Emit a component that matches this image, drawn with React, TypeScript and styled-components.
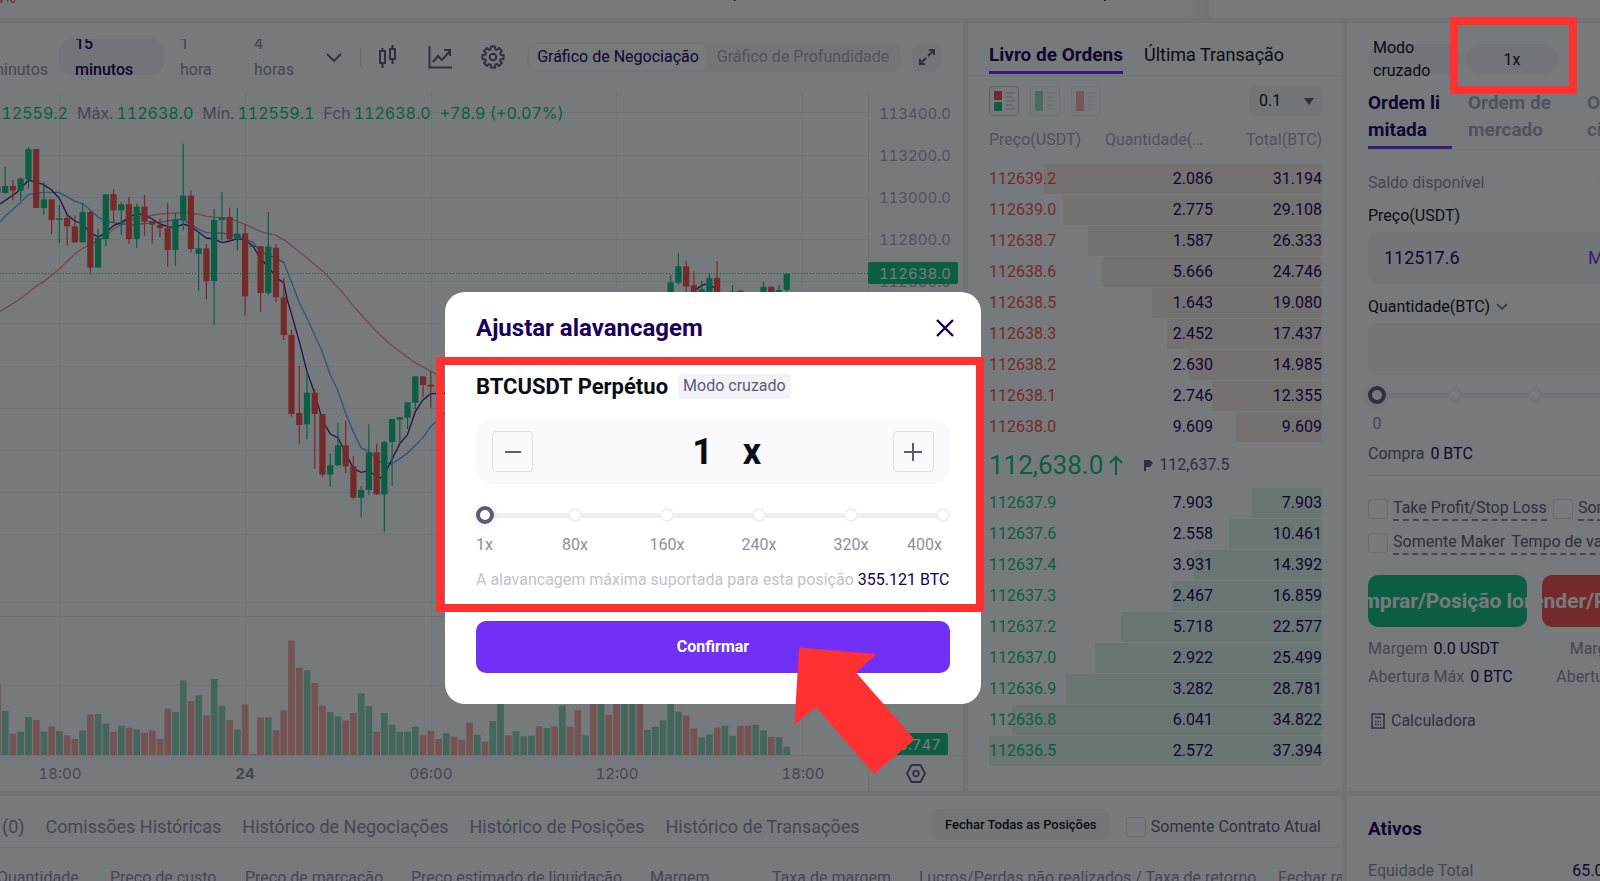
import React from "react";
import styled, { createGlobalStyle } from "styled-components";

const c = {
  ink: "#1a0057",
  black: "#0a0e16",
  sub: "#5e5b75",
  muted: "#8f8da6",
  faint: "#a9a7bb",
  line: "#f0f0f4",
  field: "#f6f6f9",
  green: "#10bf82",
  red: "#f84f49",
  purple: "#7030f5",
  mark: "#ff3131",
};

const Global = createGlobalStyle`
  *, *::before, *::after { box-sizing: border-box; }
  body { margin: 0; background: #f0f1f4; color: ${c.ink}; font: 400 16px/24px Roboto, "Noto Sans", sans-serif; overflow: hidden; }
  button, input, select { font: inherit; color: inherit; margin: 0; }
  button { border: 0; background: none; padding: 0; cursor: pointer; }
`;

/* ---------- page frame ---------- */
const Page = styled.div`
  min-height: 100vh;
  overflow: hidden;
`;
const Ticker = styled.header`
  display: flex;
  height: 18px;
  overflow: hidden;
  background: #fff;
`;
const TickerStats = styled.div`
  flex: 1;
  display: grid;
  grid-template-columns: 106px 155px 472px 184px 186px 1fr;
  margin-top: -19px;
`;
const Change = styled.span`
  color: ${c.red};
  margin-top: 5px;
  margin-left: -5px;
`;
const TickerEdge = styled.div`
  width: 30px;
  margin-right: 390px;
  background: linear-gradient(to right, #fff, #f0f1f4);
`;
const Columns = styled.main`
  display: grid;
  grid-template-columns: minmax(0, 1fr) 253px;
  gap: 5px;
  margin-top: 5px;
`;
const Left = styled.div`
  display: grid;
  grid-template-columns: minmax(0, 1fr) 374px;
  grid-template-rows: auto 1fr;
  gap: 5px;
`;
const Right = styled.div`
  display: grid;
  grid-template-rows: 768px 1fr;
  gap: 5px;
`;
const Panel = styled.section`
  background: #fff;
  min-width: 0;
`;

/* ---------- chart ---------- */
const ChartPanel = styled(Panel)`
  overflow: hidden;
`;
const Toolbar = styled.div`
  display: flex;
  justify-content: flex-end;
  align-items: center;
  height: 69px;
  padding: 0 21px 2px 0;
`;
const Interval = styled.button<{ $active?: boolean; $width: number }>`
  flex: none;
  display: flex;
  align-items: center;
  width: ${(p) => p.$width}px;
  height: 36px;
  padding: 0 16px;
  overflow: hidden;
  border-radius: 12px;
  text-align: left;
  line-height: 26px;
  font-weight: ${(p) => (p.$active ? 500 : 400)};
  color: ${(p) => (p.$active ? c.ink : c.muted)};
  background: ${(p) => (p.$active ? "#f1f1f5" : "none")};
`;
const Chevron = styled.svg`
  flex: none;
  margin-left: 4px;
`;
const IconButton = styled.button`
  flex: none;
  display: flex;
  color: ${c.sub};
  margin-right: 29px;
  &:nth-last-child(3) { margin-right: 22px; }
`;
const Divider = styled.span`
  flex: none;
  width: 1px;
  height: 18px;
  margin: 0 16px 0 18px;
  background: #dcdce4;
`;
const Segmented = styled.div`
  flex: none;
  display: flex;
  height: 30px;
  padding: 2px;
  border-radius: 10px;
  background: ${c.field};
`;
const Segment = styled.button<{ $active?: boolean; $width: number }>`
  width: ${(p) => p.$width}px;
  border-radius: 8px;
  white-space: nowrap;
  background: ${(p) => (p.$active ? "#fff" : "none")};
  color: ${(p) => (p.$active ? c.ink : c.faint)};
`;
const Expand = styled.button`
  flex: none;
  display: grid;
  place-items: center;
  width: 30px;
  height: 30px;
  margin-left: 11px;
  border-radius: 10px;
  color: ${c.sub};
  background: ${c.field};
`;
const ChartArea = styled.div`
  position: relative;
  height: 699px;
`;
const Legend = styled.div`
  position: absolute;
  top: 9px;
  left: -9px;
  display: flex;
  gap: 9px;
  font-family: Inter, sans-serif;
  font-variant-numeric: tabular-nums;
  white-space: nowrap;
  color: ${c.muted};
  b { font-weight: 400; color: ${c.green}; }
  span b { margin-left: 3px; }
`;
const ChartSvg = styled.svg`
  display: block;
  width: 100%;
  height: 100%;
  font-family: Inter, sans-serif;
  font-size: 15px;
  font-variant-numeric: tabular-nums;
`;

const STEP = 7.738;
const cx = (k: number) => 5.2 + k * STEP;

// index, rising, high, low, body top, body bottom (thirds of a pixel)
const candles: [number, number, number, number, number, number][] = [
  [-1, 0, 560, 580, 560, 578], [0, 1, 500, 582, 558, 579], [1, 0, 540, 601, 558, 572], [2, 1, 531, 603, 536, 572],
  [3, 1, 441, 566, 447, 538], [4, 0, 447, 624, 447, 624], [5, 1, 547, 645, 598, 624],
  [6, 0, 598, 702, 598, 660], [7, 1, 615, 730, 655, 660], [8, 0, 640, 736, 654, 679],
  [9, 0, 646, 727, 679, 727], [10, 1, 611, 727, 636, 727], [11, 0, 632, 823, 636, 803],
  [12, 1, 686, 803, 714, 803], [13, 1, 583, 739, 583, 717], [14, 0, 567, 668, 582, 631],
  [15, 1, 606, 705, 613, 631], [16, 0, 591, 731, 613, 717], [17, 1, 611, 744, 620, 717],
  [18, 0, 585, 707, 620, 665], [19, 0, 663, 731, 663, 674], [20, 0, 655, 711, 675, 684],
  [21, 0, 610, 801, 684, 750], [22, 1, 640, 798, 658, 750], [23, 1, 431, 691, 587, 660],
  [24, 0, 572, 758, 587, 747], [25, 1, 695, 873, 745, 762], [26, 0, 732, 898, 745, 844],
  [27, 1, 626, 975, 660, 843], [28, 1, 576, 720, 651, 660], [29, 0, 623, 727, 651, 717],
  [30, 1, 624, 752, 700, 717], [31, 0, 673, 947, 700, 889], [32, 1, 736, 741, 736, 740],
  [33, 0, 738, 936, 739, 879], [34, 1, 636, 885, 740, 879], [35, 0, 732, 905, 743, 892],
  [36, 0, 835, 1020, 892, 1005], [37, 0, 988, 1250, 1005, 1242], [38, 0, 1097, 1331, 1239, 1275],
  [39, 1, 1117, 1318, 1178, 1273], [40, 0, 1167, 1406, 1178, 1242], [41, 0, 1242, 1432, 1242, 1424],
  [42, 1, 1361, 1460, 1396, 1424], [43, 1, 1270, 1397, 1336, 1396], [44, 0, 1262, 1419, 1336, 1399],
  [45, 0, 1368, 1498, 1399, 1493], [46, 1, 1458, 1552, 1470, 1493], [47, 1, 1273, 1486, 1357, 1470],
  [48, 0, 1331, 1483, 1357, 1483], [49, 1, 1322, 1595, 1326, 1483], [50, 1, 1257, 1458, 1257, 1326],
  [51, 1, 1252, 1327, 1252, 1259], [52, 1, 1206, 1287, 1207, 1253], [53, 1, 1128, 1229, 1129, 1208],
  [54, 0, 1128, 1192, 1129, 1155], [55, 0, 1115, 1223, 1154, 1160],
  [86, 1, 825, 890, 847, 890], [87, 1, 760, 854, 799, 848], [88, 0, 782, 890, 799, 860],
  [89, 0, 813, 890, 856, 890], [90, 1, 843, 890, 868, 876], [91, 1, 822, 890, 834, 890],
  [92, 0, 783, 890, 834, 890], [94, 1, 856, 890, 875, 890], [95, 0, 871, 890, 872, 890],
  [98, 1, 846, 890, 860, 890], [99, 0, 860, 890, 860, 890], [100, 1, 854, 890, 870, 890],
  [101, 1, 820, 890, 821, 870],
];

// volume bars from index -1: positive rising, negative falling (thirds of a pixel)
const volumes = [
  -214, 132, -64, 70, 114, -105, 70, -86, 72, -59, -48, 74, -122, 123, 94, -70, 88, -82, 77, -66, -74, -48,
  -139, 129, 224, -162, 179, -119, 228, 148, -105, 77, -152, 3, -113, 113, -75, -134, -344, -262, 254, -216,
  -148, 129, 116, -104, -126, 185, 147, -70, 126, 91, 70, 70, 85, -59, -72, -48, 65, -55, -46, -97, 61, -40,
  102, 154, -59, 71, 56, 58, -86, 81, -86, 148, -85, -134, 59, -160, 170, -120, -175, 180, 185, -165, 75, 85,
  104, 154, 130, -118, -80, 53, 62, -82, 88, 58, -87, -88, 91, 74, -55, 53, 25,
];

const ma = {
  violet:
    "0,612 50,578 86,540 130,553 155,570 178,595 202,645 225,663 248,672 271,698 295,711 318,698 341,676 364,668 387,652 410,640 434,645 457,657 480,672 503,680 527,683 550,672 573,680 596,697 619,714 642,717 666,728 689,723 712,716 735,720 759,738 781,775 805,800 828,832 851,848 862,900 874,940 898,1025 921,1115 944,1180 967,1260 991,1302 1014,1313 1037,1360 1060,1405 1083,1417 1107,1412 1130,1430 1145,1434 1160,1410 1200,1330 1222,1305 1246,1235 1269,1200 1292,1181 1340,1180",
  blue:
    "0,665 20,645 62,607 86,583 130,577 178,577 225,604 250,612 271,630 295,652 318,664 364,672 400,674 434,670 480,667 527,658 550,660 573,673 596,688 619,698 666,699 712,708 759,727 781,755 828,775 851,787 874,845 898,908 921,955 967,1055 991,1125 1014,1172 1037,1240 1060,1295 1083,1343 1107,1355 1140,1385 1176,1392 1222,1360 1269,1313 1292,1280 1340,1235",
  red:
    "0,935 60,897 110,858 135,842 178,807 225,761 250,744 271,735 318,707 341,687 387,660 434,650 480,642 550,638 600,643 619,649 689,655 735,673 781,694 828,706 860,725 920,773 970,815 1030,880 1060,918 1130,995 1170,1033 1245,1088 1340,1140",
};

function Chart() {
  return (
    <ChartSvg viewBox="0 92 963 699" preserveAspectRatio="xMaxYMin slice" role="img" aria-label="Gráfico BTCUSDT">
      <g stroke={c.line} strokeWidth="1">
        {[59.5, 245.5, 431.5, 616.5, 802.5].map((x) => <path key={x} d={`M${x} 92V755`} />)}
        {[112.5, 155.5, 197.5, 239.5, 281.5, 323.5, 366.5, 408.5, 450.5, 492.5, 534.5, 602.5, 685.5].map((y) => (
          <path key={y} d={`M0 ${y}H868`} />
        ))}
      </g>
      <path d="M0 616.5H963M0 755.5H963M868.5 92V791" stroke="#ebebf0" />
      {volumes.map((v, i) => (
        <rect key={i} x={cx(i - 1) - 3.3} width="6.7" y={755 - Math.abs(v) / 3} height={Math.abs(v) / 3} fill={v > 0 ? "#8ed3b8" : "#f9aaa5"} />
      ))}
      <g transform="scale(.33333)" fill="none" strokeWidth="4">
        <polyline points={ma.red} stroke="#f8918a" />
        <polyline points={ma.blue} stroke="#6aa6e8" />
        <polyline points={ma.violet} stroke="#3f1f80" />
        <polyline points="2080,875 2100,860 2113,853 2130,853 2150,870" stroke="#3f1f80" />
      </g>
      {candles.map(([k, up, hi, lo, top, bottom]) => (
        <g key={k} fill={up ? c.green : c.red}>
          <rect x={cx(k) - 0.6} width="1.2" y={hi / 3} height={(lo - hi) / 3} />
          <rect x={cx(k) - 3.1} width="6.2" y={top / 3} height={Math.max(1.5, (bottom - top) / 3)} />
        </g>
      ))}
      <path d="M0 273.5H868" stroke={c.green} strokeDasharray="1 2" />
      <g fill={c.faint} textAnchor="end">
        <text x="951" y="119">113400.0</text>
        <text x="951" y="161">113200.0</text>
        <text x="951" y="203">113000.0</text>
        <text x="951" y="245">112800.0</text>
        <text x="951" y="287">112600.0</text>
      </g>
      <rect x="868" y="262" width="90" height="22" rx="2" fill={c.green} />
      <rect x="868" y="733" width="80" height="22" rx="2" fill={c.green} />
      <g fill="#fff" textAnchor="end">
        <text x="951" y="279">112638.0</text>
        <text x="941" y="750">5.747</text>
      </g>
      <g fill={c.muted} textAnchor="middle">
        <text x="60" y="779">18:00</text>
        <text x="245" y="779" fontWeight="700">24</text>
        <text x="431" y="779">06:00</text>
        <text x="617" y="779">12:00</text>
        <text x="803" y="779">18:00</text>
      </g>
      <g fill="none" stroke={c.sub} strokeWidth="1.8" strokeLinejoin="round">
        <path d="M911.5 765h9l4.500 8.500-4.500 8.500h-9l-4.500-8.500z" />
        <circle cx="916" cy="773.5" r="2.800" />
      </g>
    </ChartSvg>
  );
}

const gearPath = (() => {
  const at = (radius: number, degrees: number) => {
    const a = (degrees * Math.PI) / 180;
    return `${(12 + radius * Math.sin(a)).toFixed(2)} ${(12 - radius * Math.cos(a)).toFixed(2)}`;
  };
  return (
    "M" +
    Array.from({ length: 8 }, (_, i) => i * 45)
      .map((a) => [at(8, a - 16), at(10.8, a - 11), at(10.8, a + 11), at(8, a + 16)].join("L"))
      .join("L") +
    "Z"
  );
})();

/* ---------- order book ---------- */
const BookTabs = styled.div`
  display: flex;
  gap: 21px;
  height: 53px;
  padding: 0 21px;
  border-bottom: 1px solid ${c.line};
`;
const BookTab = styled.button<{ $active?: boolean }>`
  height: 51px;
  padding-top: 16px;
  font-size: ${(p) => (p.$active ? 19 : 18)}px;
  font-weight: ${(p) => (p.$active ? 700 : 400)};
  border-bottom: 3px solid ${(p) => (p.$active ? c.purple : "transparent")};
  color: ${(p) => (p.$active ? c.ink : c.black)};
`;
const BookTools = styled.div`
  display: flex;
  gap: 11px;
  padding: 10px 20px 0 21px;
`;
const Mode = styled.button<{ $active?: boolean }>`
  width: 30px;
  height: 30px;
  border: 1px solid ${(p) => (p.$active ? "#c9c8d6" : c.line)};
  border-radius: 4px;
  display: grid;
  place-items: center;
`;
const Precision = styled.label`
  display: grid;
  align-items: center;
  width: 73px;
  height: 30px;
  margin-left: auto;
  border-radius: 6px;
  background: ${c.field};
  select, svg { grid-area: 1 / 1; }
  select { appearance: none; border: 0; background: none; padding: 0 10px; height: 30px; color: ${c.black}; }
  svg { justify-self: end; margin-right: 8px; pointer-events: none; }
`;
const Book = styled.table`
  width: 333px;
  margin: 6px 20px 24px 21px;
  table-layout: fixed;
  border-collapse: separate;
  border-spacing: 0 1px;
  th, td { padding: 0; text-align: right; font-weight: 400; height: 30px; }
  th { height: 40px; padding-bottom: 7px; color: ${c.faint}; overflow: hidden; text-overflow: ellipsis; white-space: nowrap; }
  th:first-child, td:first-child { text-align: left; }
  th:nth-child(2) { padding-left: 5px; padding-right: 2px; }
`;
const Level = styled.tr<{ $side: "ask" | "bid" }>`
  background-image: linear-gradient(${(p) => (p.$side === "ask" ? "#fceae6, #fceae6" : "#e3f4ee, #e3f4ee")});
  background-repeat: no-repeat;
  background-position: right;
  td:first-child { color: ${(p) => (p.$side === "ask" ? c.red : c.green)}; }
`;
const MidCell = styled.td`
  && { height: 44px; }
  div { display: flex; align-items: center; color: ${c.sub}; }
  strong { font-size: 26px; font-weight: 400; color: ${c.green}; margin-right: 6px; }
  svg + svg { margin: 0 6px 0 20px; }
`;

const asks = [
  ["112639.2", "2.086", "31.194"], ["112639.0", "2.775", "29.108"], ["112638.7", "1.587", "26.333"],
  ["112638.6", "5.666", "24.746"], ["112638.5", "1.643", "19.080"], ["112638.3", "2.452", "17.437"],
  ["112638.2", "2.630", "14.985"], ["112638.1", "2.746", "12.355"], ["112638.0", "9.609", "9.609"],
];
const bids = [
  ["112637.9", "7.903", "7.903"], ["112637.6", "2.558", "10.461"], ["112637.4", "3.931", "14.392"],
  ["112637.3", "2.467", "16.859"], ["112637.2", "5.718", "22.577"], ["112637.0", "2.922", "25.499"],
  ["112636.9", "3.282", "28.781"], ["112636.8", "6.041", "34.822"], ["112636.5", "2.572", "37.394"],
];
const deepest = 37.394;

function Levels({ rows, side }: { rows: string[][]; side: "ask" | "bid" }) {
  return (
    <tbody>
      {rows.map(([price, qty, total]) => (
        <Level key={price} $side={side} style={{ backgroundSize: `${(Number(total) / deepest) * 100}% 100%` }}>
          <td>{price}</td>
          <td>{qty}</td>
          <td>{total}</td>
        </Level>
      ))}
    </tbody>
  );
}

const ModeIcon = ({ kind }: { kind: "both" | "bid" | "ask" }) => (
  <svg width="22" height="22" viewBox="0 0 22 22" fill="none">
    {kind === "both" ? (
      <>
        <rect x="1" y="1" width="8" height="9" rx="1" fill={c.red} />
        <rect x="1" y="12" width="8" height="9" rx="1" fill={c.green} />
      </>
    ) : (
      <rect x="1" y="1" width="8" height="20" rx="1" fill={kind === "bid" ? "#9fdcc6" : "#fbb3ae"} />
    )}
    <path d="M13 3h9M13 7h6M13 11h9M13 15h6M13 19h9" stroke={kind === "both" ? "#d3d2dd" : "#ececf1"} strokeWidth="1.5" />
  </svg>
);

/* ---------- order form ---------- */
const Form = styled.form`
  display: flex;
  flex-direction: column;
  align-items: stretch;
  width: 333px;
  margin-left: 21px;
`;
const ModeRow = styled.div`
  display: flex;
  gap: 6px;
  padding-top: 21px;
`;
const Pill = styled.button`
  position: relative;
  display: flex;
  align-items: center;
  justify-content: center;
  width: 92px;
  height: 30px;
  padding: 0 5px;
  border-radius: 15px;
  background: #f1f1f5;
  color: ${c.black};
  text-align: left;
  line-height: 23px;
`;
const PillMark = styled.span`
  position: absolute;
  z-index: 3;
  top: -27px;
  left: -16px;
  width: 127px;
  height: 77px;
  border: 8px solid ${c.mark};
`;
const OrderTabs = styled.div`
  display: flex;
  gap: 16px;
  margin-top: 15px;
  border-bottom: 1px solid ${c.line};
`;
const OrderTab = styled.button<{ $active?: boolean; $width: number }>`
  flex: none;
  width: ${(p) => p.$width}px;
  height: 60px;
  text-align: left;
  font-size: 19px;
  font-weight: 700;
  line-height: 27px;
  padding-bottom: 3px;
  color: ${(p) => (p.$active ? c.ink : c.faint)};
  border-bottom: 3px solid ${(p) => (p.$active ? c.purple : "transparent")};
`;
const Line = styled.div<{ $top: number; $tone?: string }>`
  display: flex;
  align-items: center;
  gap: 6px;
  height: 24px;
  margin-top: ${(p) => p.$top}px;
  color: ${(p) => p.$tone ?? c.muted};
  white-space: nowrap;
  b { font-weight: 400; color: ${c.ink}; }
`;
const Ends = styled(Line)`
  justify-content: space-between;
  span { display: flex; gap: 6px; }
`;
const Field = styled.div`
  display: flex;
  align-items: center;
  height: 52px;
  margin-top: 4px;
  padding: 0 16px;
  border-radius: 10px;
  background: ${c.field};
  font-size: 18px;
  input { border: 0; background: none; padding: 0; width: 204px; outline: 0; }
  button { color: ${c.purple}; }
`;
const SliderHolder = styled.div`
  flex: 1;
`;
const Zero = styled.span`
  width: 18px;
  text-align: center;
`;
const Rule = styled.hr`
  width: 100%;
  height: 1px;
  border: 0;
  margin: 9px 0 16px;
  background: #e2e2ea;
`;
const Checks = styled.div`
  display: flex;
  gap: 6px;
  height: 34px;
  align-items: center;
  white-space: nowrap;
`;
const Check = styled.label`
  display: flex;
  align-items: center;
  gap: 5px;
  color: ${c.sub};
  input {
    appearance: none;
    width: 20px;
    height: 20px;
    border: 1px solid #dddde6;
    border-radius: 3px;
  }
`;
const Dashed = styled.span`
  line-height: 22px;
  border-bottom: 2px dashed ${c.muted};
  color: ${c.sub};
`;
const Actions = styled.div`
  display: grid;
  grid-template-columns: 1fr 1fr;
  gap: 15px;
  margin-top: 15px;
`;
const Action = styled.button<{ $tone: string }>`
  display: flex;
  justify-content: center;
  align-items: center;
  height: 52px;
  overflow: hidden;
  border-radius: 10px;
  background: ${(p) => p.$tone};
  color: #fff;
  font-size: 21px;
  font-weight: 700;
  white-space: nowrap;
`;
const Calculator = styled.a`
  display: flex;
  align-items: center;
  gap: 6px;
  margin: 20px 0 0 3px;
  color: ${c.sub};
  text-decoration: none;
`;
const Assets = styled.div`
  width: 354px;
  padding: 20px 0 0 21px;
  h2 { margin: 0; font-size: 19px; line-height: 26px; font-weight: 700; }
`;

/* ---------- slider ---------- */
const SliderBox = styled.div`
  display: grid;
  align-items: center;
  height: 18px;
  > * { grid-area: 1 / 1; }
`;
const Track = styled.div`
  height: 5px;
  margin: 0 7px;
  background: ${c.line};
`;
const Dots = styled.div`
  display: flex;
  justify-content: space-between;
  i { width: 14px; height: 14px; border-radius: 50%; border: 2px solid ${c.line}; background: #fff; }
`;
const Range = styled.input`
  appearance: none;
  width: 100%;
  height: 18px;
  margin: 0;
  background: none;
  &::-webkit-slider-thumb {
    appearance: none;
    width: 18px;
    height: 18px;
    border-radius: 50%;
    border: 4px solid ${c.sub};
    background: #fff;
    box-shadow: 0 2px 8px rgba(40, 30, 90, 0.12);
  }
`;
function Slider({ stops, label, min, max }: { stops: number; label: string; min: number; max: number }) {
  return (
    <SliderBox>
      <Track />
      <Dots>{Array.from({ length: stops }, (_, i) => <i key={i} />)}</Dots>
      <Range type="range" aria-label={label} min={min} max={max} defaultValue={min} />
    </SliderBox>
  );
}

/* ---------- positions ---------- */
const Positions = styled(Panel)`
  grid-column: 1 / -1;
  overflow: hidden;
`;
const PosBar = styled.div`
  display: flex;
  align-items: center;
  height: 52px;
  padding: 10px 21px 0 0;
  border-bottom: 1px solid ${c.line};
`;
const PosTabs = styled.div`
  display: flex;
  gap: 21px;
  margin-right: auto;
  padding-left: 2px;
  button { font-size: 18px; color: ${c.muted}; white-space: nowrap; }
`;
const CloseAll = styled.button`
  width: 178px;
  height: 31px;
  margin: 0 16px 4px 0;
  border-radius: 8px;
  background: ${c.field};
  color: ${c.black};
  font-size: 13px;
  font-weight: 500;
  white-space: nowrap;
`;
const PosTable = styled.table`
  table-layout: fixed;
  width: 1500px;
  margin: 18px 0 0 -3px;
  border-spacing: 0;
  th { padding: 0; text-align: left; font-weight: 400; color: ${c.muted}; white-space: nowrap; }
`;

/* ---------- dialog ---------- */
const Backdrop = styled.div`
  position: fixed;
  inset: 0;
  z-index: 2;
  display: flex;
  align-items: flex-start;
  justify-content: center;
  padding: 292px 174px 0 0;
  background: rgba(8, 12, 16, 0.55);
`;
const Dialog = styled.div`
  position: relative;
  width: 536px;
  padding: 23px 31px 31px;
  border-radius: 20px;
  background: #fff;
`;
const DialogHead = styled.div`
  display: flex;
  justify-content: space-between;
  align-items: center;
  height: 26px;
  h1 { margin: 0; font-size: 24px; line-height: 26px; font-weight: 700; }
  button { display: flex; margin-right: -4px; }
`;
const Pair = styled.div`
  display: flex;
  align-items: center;
  gap: 10px;
  margin-top: 33px;
  h2 { margin: 0; font-size: 22px; line-height: 24px; font-weight: 700; color: ${c.black}; }
  span { height: 25px; padding: 0 5px; border-radius: 4px; background: #f3f2f7; color: ${c.sub}; }
`;
const Stepper = styled.div`
  display: flex;
  align-items: center;
  justify-content: space-between;
  height: 65px;
  margin-top: 20px;
  padding: 0 16px;
  border-radius: 16px;
  background: #fafafc;
  color: ${c.black};
  font-size: 36px;
  font-weight: 700;
`;
const StepButton = styled.button`
  display: grid;
  place-items: center;
  width: 41px;
  height: 41px;
  border: 1px solid #dddde6;
  border-radius: 4px;
  color: ${c.sub};
`;
const Amount = styled.label`
  display: flex;
  align-items: center;
  gap: 30px;
  input { width: 48px; border: 0; padding: 0; background: none; text-align: right; outline: 0; }
`;
const SliderWrap = styled.div`
  margin-top: 22px;
`;
const Scale = styled.div`
  display: grid;
  grid-template-columns: 53fr 92fr 92fr 92fr 92fr 45fr;
  padding-right: 8px;
  margin-top: 9px;
  text-align: center;
  color: ${c.muted};
  span:first-child { text-align: left; }
  span:last-child { text-align: right; }
`;
const Note = styled.p`
  margin: 11px 0 0;
  color: #c3c1d2;
  white-space: nowrap;
  b { font-weight: 400; color: ${c.ink}; }
`;
const Confirm = styled.button`
  display: block;
  width: 100%;
  height: 52px;
  margin-top: 29px;
  border-radius: 10px;
  background: ${c.purple};
  color: #fff;
  font-weight: 700;
`;
const DialogMark = styled.div`
  position: absolute;
  top: 65px;
  left: -9px;
  right: -3px;
  height: 255px;
  border: 8px solid ${c.mark};
  pointer-events: none;
`;
const Pointer = styled.svg`
  position: absolute;
  top: 355px;
  left: 349px;
  pointer-events: none;
`;

export default function App() {
  return (
    <>
      <Global />
      <Page>
        <Ticker>
          <TickerStats>
            <Change>4%</Change>
            <span>,</span>
            <span>,</span>
            <span>p</span>
            <span>,</span>
            <span>p</span>
          </TickerStats>
          <TickerEdge />
        </Ticker>
        <Columns>
          <Left>
            <ChartPanel>
              <Toolbar>
                <Interval $width={85}>5 minutos</Interval>
                <Interval $width={105} $active>15 minutos</Interval>
                <Interval $width={74}>1 hora</Interval>
                <Interval $width={84}>4 horas</Interval>
                <Chevron width="16" height="16" viewBox="0 0 16 16" fill="none" stroke={c.sub} strokeWidth="1.8">
                  <path d="M1 5l7 7 7-7" />
                </Chevron>
                <Divider />
                <IconButton aria-label="Tipo de gráfico">
                  <svg width="22" height="24" viewBox="0 0 22 24" fill="none" stroke="currentColor" strokeWidth="2">
                    <path d="M3 6h5v12H3zM5.500 3v3M5.500 18v5M13 4h5v10h-5zM15.500 0v4M15.500 14v5" />
                  </svg>
                </IconButton>
                <IconButton aria-label="Indicadores">
                  <svg width="24" height="24" viewBox="0 0 24 24" fill="none" stroke="currentColor" strokeWidth="2">
                    <path d="M1.500 1v21.500H24M5 17l5-6 4 4 8-9M16 5h6v6" />
                  </svg>
                </IconButton>
                <IconButton aria-label="Configurações">
                  <svg width="24" height="24" viewBox="0 0 24 24" fill="none" stroke="currentColor" strokeWidth="2" strokeLinejoin="round">
                    <path d={gearPath} />
                    <circle cx="12" cy="12" r="3.300" />
                  </svg>
                </IconButton>
                <Segmented>
                  <Segment $active $width={178}>Gráfico de Negociação</Segment>
                  <Segment $width={192}>Gráfico de Profundidade</Segment>
                </Segmented>
                <Expand aria-label="Expandir">
                  <svg width="16" height="16" viewBox="0 0 16 16" fill="none" stroke="currentColor" strokeWidth="2">
                    <path d="M9 7l6-6M10 1h5v5M7 9l-6 6M1 10v5h5" />
                  </svg>
                </Expand>
              </Toolbar>
              <ChartArea>
                <Chart />
                <Legend>
                  <b>112559.2</b>
                  <span>Máx.<b>112638.0</b></span>
                  <span>Mín.<b>112559.1</b></span>
                  <span>Fch<b>112638.0</b></span>
                  <b>+78.9 (+0.07%)</b>
                </Legend>
              </ChartArea>
            </ChartPanel>

            <Panel>
              <BookTabs>
                <BookTab $active>Livro de Ordens</BookTab>
                <BookTab>Última Transação</BookTab>
              </BookTabs>
              <BookTools>
                <Mode $active aria-label="Compra e venda"><ModeIcon kind="both" /></Mode>
                <Mode aria-label="Compras"><ModeIcon kind="bid" /></Mode>
                <Mode aria-label="Vendas"><ModeIcon kind="ask" /></Mode>
                <Precision>
                  <select aria-label="Precisão"><option>0.1</option></select>
                  <svg width="10" height="7" viewBox="0 0 10 7"><path d="M0 0h10L5 7z" fill={c.sub} /></svg>
                </Precision>
              </BookTools>
              <Book>
                <colgroup>
                  <col width="111" />
                  <col width="113" />
                  <col />
                </colgroup>
                <thead>
                  <tr>
                    <th>Preço(USDT)</th>
                    <th>Quantidade(BTC)</th>
                    <th>Total(BTC)</th>
                  </tr>
                </thead>
                <Levels rows={asks} side="ask" />
                <tbody>
                  <tr>
                    <MidCell colSpan={3}>
                      <div>
                        <strong>112,638.0</strong>
                        <svg width="14" height="20" viewBox="0 0 14 20" fill="none" stroke={c.green} strokeWidth="2">
                          <path d="M7 20V2M1 8l6-6 6 6" />
                        </svg>
                        <svg width="10" height="12" viewBox="0 0 10 12" fill={c.sub}>
                          <path d="M1 1h6l3 3-3 4H3v4H1z" />
                        </svg>
                        112,637.5
                      </div>
                    </MidCell>
                  </tr>
                </tbody>
                <Levels rows={bids} side="bid" />
              </Book>
            </Panel>

            <Positions>
              <PosBar>
                <PosTabs>
                  <button>(0)</button>
                  <button>Comissões Históricas</button>
                  <button>Histórico de Negociações</button>
                  <button>Histórico de Posições</button>
                  <button>Histórico de Transações</button>
                </PosTabs>
                <CloseAll>Fechar Todas as Posições</CloseAll>
                <Check><input type="checkbox" />Somente Contrato Atual</Check>
              </PosBar>
              <PosTable>
                <colgroup>
                  <col width="113" /><col width="135" /><col width="166" /><col width="239" />
                  <col width="122" /><col width="147" /><col width="359" /><col />
                </colgroup>
                <thead>
                  <tr>
                    <th>Quantidade</th>
                    <th>Preço de custo</th>
                    <th>Preço de marcação</th>
                    <th>Preço estimado de liquidação</th>
                    <th>Margem</th>
                    <th>Taxa de margem</th>
                    <th>Lucros/Perdas não realizados / Taxa de retorno</th>
                    <th>Fechar rapidamente</th>
                  </tr>
                </thead>
              </PosTable>
            </Positions>
          </Left>

          <Right>
            <Panel>
              <Form onSubmit={(e) => e.preventDefault()}>
                <ModeRow>
                  <Pill type="button">Modo cruzado</Pill>
                  <Pill type="button">1x<PillMark /></Pill>
                </ModeRow>
                <OrderTabs>
                  <OrderTab type="button" $active $width={84}>Ordem li<br />mitada</OrderTab>
                  <OrderTab type="button" $width={103}>Ordem de mercado</OrderTab>
                  <OrderTab type="button" $width={110}>Ordem con<br />cional</OrderTab>
                </OrderTabs>
                <Ends $top={21}>Saldo disponível<b>28.6412 USDT</b></Ends>
                <Line as="label" htmlFor="price" $top={9} $tone={c.black}>Preço(USDT)</Line>
                <Field>
                  <input id="price" defaultValue="112517.6" />
                  <button type="button">Mercado</button>
                </Field>
                <Line as="label" htmlFor="amount" $top={11} $tone={c.black}>
                  Quantidade(BTC)
                  <svg width="12" height="8" viewBox="0 0 12 8" fill="none" stroke={c.sub} strokeWidth="1.5"><path d="M1 1l5 5 5-5" /></svg>
                </Line>
                <Field><input id="amount" /></Field>
                <Line $top={8}><SliderHolder><Slider stops={5} label="Percentual" min={0} max={100} /></SliderHolder></Line>
                <Line $top={5}><Zero>0</Zero></Line>
                <Line $top={6} $tone={c.sub}>Compra <b>0 BTC</b></Line>
                <Rule />
                <Checks>
                  <Check><input type="checkbox" /><Dashed>Take Profit/Stop Loss</Dashed></Check>
                  <Check><input type="checkbox" /><Dashed>Somente Reduzir</Dashed></Check>
                </Checks>
                <Checks>
                  <Check><input type="checkbox" /><Dashed>Somente Maker</Dashed></Check>
                  <Dashed>Tempo de validade</Dashed>
                </Checks>
                <Actions>
                  <Action $tone={c.green}>Comprar/Posição longa</Action>
                  <Action $tone={c.red}>Vender/Posição curta</Action>
                </Actions>
                <Ends $top={10}><span>Margem <b>0.0 USDT</b></span><span>Margem <b>0.0 USDT</b></span></Ends>
                <Ends $top={4}><span>Abertura Máx <b>0 BTC</b></span><span>Abertura Máx <b>0 BTC</b></span></Ends>
                <Calculator href="#">
                  <svg width="14" height="16" viewBox="0 0 14 16" fill="none" stroke="currentColor" strokeWidth="1.5">
                    <path d="M1 1h12v14H1zM4 4.500h6" />
                    <path d="M4 8.500h6M4 11.500h6" strokeDasharray="1.500 1" />
                  </svg>
                  Calculadora
                </Calculator>
              </Form>
            </Panel>
            <Panel>
              <Assets>
                <h2>Ativos</h2>
                <Ends $top={17}>Equidade Total<b>65.0142216 USDT</b></Ends>
              </Assets>
            </Panel>
          </Right>
        </Columns>
      </Page>

      <Backdrop>
        <Dialog role="dialog" aria-labelledby="dialog-title">
          <DialogHead>
            <h1 id="dialog-title">Ajustar alavancagem</h1>
            <button aria-label="Fechar">
              <svg width="18" height="18" viewBox="0 0 18 18" stroke="currentColor" strokeWidth="2.400"><path d="M1 1l16 16M17 1L1 17" /></svg>
            </button>
          </DialogHead>
          <Pair>
            <h2>BTCUSDT Perpétuo</h2>
            <span>Modo cruzado</span>
          </Pair>
          <Stepper>
            <StepButton aria-label="Diminuir">
              <svg width="18" height="18" stroke="currentColor" strokeWidth="2"><path d="M1 9h16" /></svg>
            </StepButton>
            <Amount><input aria-label="Alavancagem" defaultValue="1" />x</Amount>
            <StepButton aria-label="Aumentar">
              <svg width="18" height="18" stroke="currentColor" strokeWidth="2"><path d="M0 9h18M9 0v18" /></svg>
            </StepButton>
          </Stepper>
          <SliderWrap><Slider stops={6} label="Alavancagem" min={1} max={400} /></SliderWrap>
          <Scale>
            {["1x", "80x", "160x", "240x", "320x", "400x"].map((s) => <span key={s}>{s}</span>)}
          </Scale>
          <Note>A alavancagem máxima suportada para esta posição <b>355.121 BTC</b></Note>
          <Confirm>Confirmar</Confirm>
          <DialogMark />
          <Pointer width="121" height="128" viewBox="0 0 121 128" fill={c.mark}>
            <path d="M5 0.500L82.500 7 62 25.500 120.500 92.500 80 127 22 60 0.500 77.500z" />
          </Pointer>
        </Dialog>
      </Backdrop>
    </>
  );
}
